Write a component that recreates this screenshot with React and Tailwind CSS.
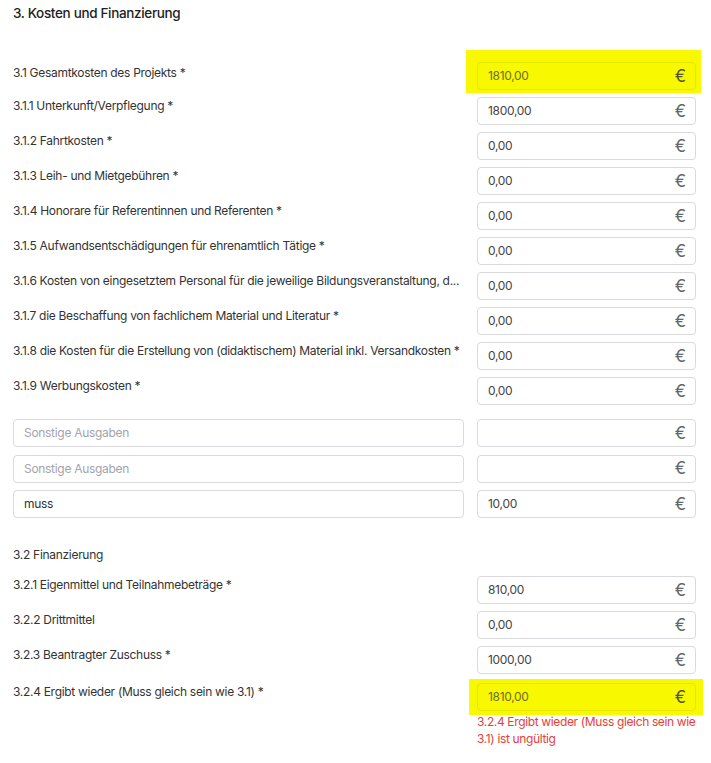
import React from 'react';

// Kostenzeilen des Formulars
const COST_ROWS = [
    { id: '3.1.1', label: '3.1.1 Unterkunft/Verpflegung *', value: '1800,00' },
    { id: '3.1.2', label: '3.1.2 Fahrtkosten *', value: '0,00' },
    { id: '3.1.3', label: '3.1.3 Leih- und Mietgebühren *', value: '0,00' },
    { id: '3.1.4', label: '3.1.4 Honorare für Referentinnen und Referenten *', value: '0,00' },
    { id: '3.1.5', label: '3.1.5 Aufwandsentschädigungen für ehrenamtlich Tätige *', value: '0,00' },
    { id: '3.1.6', label: '3.1.6 Kosten von eingesetztem Personal für die jeweilige Bildungsveranstaltung, d...', value: '0,00' },
    { id: '3.1.7', label: '3.1.7 die Beschaffung von fachlichem Material und Literatur *', value: '0,00' },
    { id: '3.1.8', label: '3.1.8 die Kosten für die Erstellung von (didaktischem) Material inkl. Versandkosten *', value: '0,00' },
    { id: '3.1.9', label: '3.1.9 Werbungskosten *', value: '0,00' },
];

const OTHER_ROWS = [
    { id: 'o1', name: '', value: '' },
    { id: 'o2', name: '', value: '' },
    { id: 'o3', name: 'muss', value: '10,00' },
];

const FINANCE_ROWS = [
    { id: '3.2.1', label: '3.2.1 Eigenmittel und Teilnahmebeträge *', value: '810,00' },
    { id: '3.2.2', label: '3.2.2 Drittmittel', value: '0,00' },
    { id: '3.2.3', label: '3.2.3 Beantragter Zuschuss *', value: '1000,00' },
];

function EuroInput({ value, highlight = false }) {
    return (
        <div
            className={`h-[28px] flex items-center pl-[10px] pr-[9px] rounded-[4px] border ${
                highlight ? 'bg-[#f8f800] border-[#e6e600]' : 'bg-white border-[#d9d9de]'
            }`}
        >
            <span className={`flex-1 text-[12px] tracking-tight ${highlight ? 'text-[#6d6d2a]' : 'text-[#444]'}`}>{value}</span>
            <span className={`text-[17px] leading-none ${highlight ? 'text-[#55552a]' : 'text-[#666]'}`}>€</span>
        </div>
    );
}

function Row({ label, children, labelClass = '' }) {
    return (
        <div className="grid grid-cols-[1fr_219px] gap-x-[13px] items-start">
            <div className={`truncate text-[12px] tracking-tight leading-4 text-[#333] pt-[1px] ${labelClass}`}>{label}</div>
            {children}
        </div>
    );
}

export default function App() {
    return (
        <div className="w-[711px] h-[763px] bg-white pl-[13px] pr-[15px] font-['Inter','Noto_Sans',sans-serif] overflow-hidden">
            <h2 className="pt-[4px] text-[13.5px] tracking-tight leading-[18px] font-medium text-[#222]">3. Kosten und Finanzierung</h2>

            {/* Kosten */}
            <div className="mt-[40px] flex flex-col gap-[7px]">
                <Row label="3.1 Gesamtkosten des Projekts *" labelClass="pt-[3px]">
                    <div className="bg-[#f8f800] -ml-[11px] -mr-[5px] -mt-[12px] -mb-[3px] pl-[11px] pr-[5px] pt-[12px] pb-[3px]">
                        <EuroInput value="1810,00" highlight />
                    </div>
                </Row>
                {COST_ROWS.map(row => (
                    <Row key={row.id} label={row.label}>
                        <EuroInput value={row.value} />
                    </Row>
                ))}
            </div>

            {/* Sonstige Ausgaben */}
            <div className="mt-[14px] flex flex-col gap-[7.5px]">
                {OTHER_ROWS.map(row => (
                    <div key={row.id} className="grid grid-cols-[1fr_219px] gap-x-[13px]">
                        <div className="h-[28px] flex items-center px-[10px] rounded-[4px] border border-[#d9d9de] text-[12px] tracking-tight">
                            {row.name ? (
                                <span className="text-[#333]">{row.name}</span>
                            ) : (
                                <span className="text-[#a3a3ad]">Sonstige Ausgaben</span>
                            )}
                        </div>
                        <EuroInput value={row.value} />
                    </div>
                ))}
            </div>

            {/* Finanzierung */}
            <div className="mt-[29px] text-[12px] tracking-tight leading-4 text-[#333]">3.2 Finanzierung</div>
            <div className="mt-[13px] flex flex-col gap-[7px]">
                {FINANCE_ROWS.map(row => (
                    <Row key={row.id} label={row.label}>
                        <EuroInput value={row.value} />
                    </Row>
                ))}
                <div className="mt-[2px]">
                    <Row label="3.2.4 Ergibt wieder (Muss gleich sein wie 3.1) *">
                        <div>
                            <div className="bg-[#f8f800] -ml-[8px] -mr-[7px] -mt-[4px] pl-[8px] pr-[7px] pt-[4px] pb-[4px]">
                                <EuroInput value="1810,00" highlight />
                            </div>
                            <p className="-mt-[2px] -mr-[8px] text-[12px] tracking-[-0.03em] leading-[17px] text-[#e5413a]">
                                3.2.4 Ergibt wieder (Muss gleich sein wie 3.1) ist ungültig
                            </p>
                        </div>
                    </Row>
                </div>
            </div>
        </div>
    );
}
